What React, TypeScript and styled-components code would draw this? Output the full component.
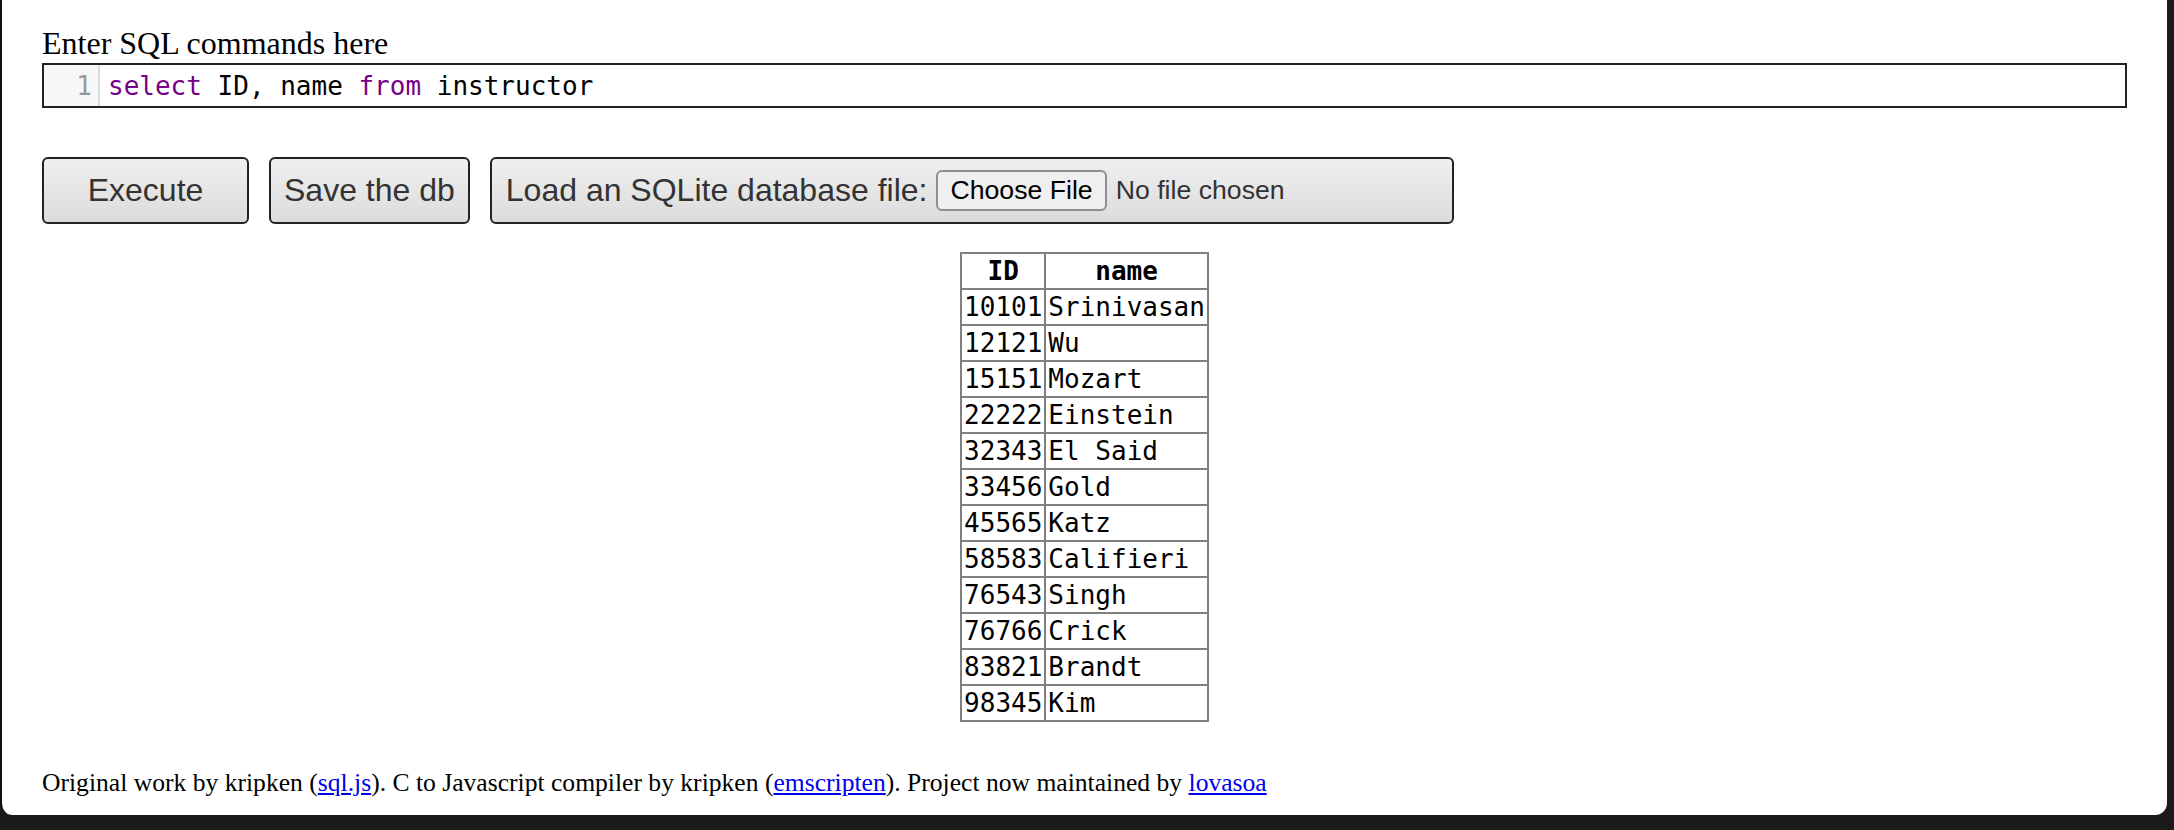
import React from 'react';
import styled, { createGlobalStyle, css } from 'styled-components';

// page chrome: dark desktop behind a white browser viewport
const GlobalStyle = createGlobalStyle`
  html, body {
    margin: 0;
    padding: 0;
    background: #1a1a1a;
  }
  body {
    width: 2174px;
    height: 830px;
    overflow: hidden;
  }
`;

const MONO = `"DejaVu Sans Mono", "Liberation Mono", monospace`;
const SANS = `"Liberation Sans", Arial, Helvetica, sans-serif`;

const Viewport = styled.div`
  box-sizing: border-box;
  width: 2167px;
  height: 815px;
  background: #fff;
  border-left: 2px solid #111;
  border-radius: 0 0 12px 12px;
  padding: 25px 40px 0 40px;
  font-family: "Liberation Serif", "Times New Roman", serif;
  color: #000;
`;

const PromptLabel = styled.label`
  display: block;
  font-size: 32px;
  line-height: 37px;
`;

/* --- sql editor (codemirror look) --- */
const Editor = styled.div`
  box-sizing: border-box;
  display: flex;
  height: 45px;
  margin-top: 1px;
  border: 2px solid #222;
  background: #fff;
`;

const Gutter = styled.div`
  box-sizing: border-box;
  width: 56px;
  display: flex;
  align-items: center;
  justify-content: flex-end;
  padding-right: 6px;
  background: #f7f7f7;
  border-right: 2px solid #ddd;
  color: #999;
  font-family: ${MONO};
  font-size: 26px;
`;

const CodeLine = styled.pre`
  margin: 0;
  padding-left: 8px;
  display: flex;
  align-items: center;
  font-family: ${MONO};
  font-size: 26px;
  color: #000;
  white-space: pre;
`;

const Keyword = styled.span`
  color: #708;
`;

/* --- toolbar --- */
const Toolbar = styled.div`
  display: flex;
  gap: 20px;
  margin-top: 49px;
`;

const buttonLook = css`
  box-sizing: border-box;
  height: 67px;
  padding: 0 13px;
  font-family: ${SANS};
  font-size: 32px;
  color: #333;
  background: linear-gradient(#efefef, #dcdcdc);
  border: 2px solid #222;
  border-radius: 6px;
`;

const ToolButton = styled.button<{ $width?: string }>`
  ${buttonLook}
  width: ${(p) => p.$width || 'auto'};
  cursor: pointer;
`;

const LoadLabel = styled.label`
  ${buttonLook}
  display: flex;
  align-items: center;
  width: 964px;
  padding: 0 14px;
  white-space: nowrap;
`;

const FileButton = styled.span`
  box-sizing: border-box;
  display: inline-flex;
  align-items: center;
  height: 41px;
  margin: 0 9px 0 9px;
  padding: 0 12px;
  font-size: 26.67px;
  color: #000;
  background: #efefef;
  border: 2px solid #8f8f8f;
  border-radius: 6px;
`;

const FileStatus = styled.span`
  font-size: 26.67px;
  color: #333;
`;

/* --- results --- */
const ResultTable = styled.table`
  margin: 28px auto 0;
  border-collapse: collapse;
  font-family: ${MONO};
  font-size: 26px;

  th,
  td {
    border: 2px solid #808080;
    padding: 2px;
    line-height: 30px;
    white-space: nowrap;
  }
  th {
    font-weight: bold;
    text-align: center;
  }
  td {
    text-align: left;
  }
`;

const Footer = styled.footer`
  margin-top: 46px;
  font-size: 25.6px;
`;

const Link = styled.a`
  color: #0000ee;
  text-decoration: underline;
`;

const rows: [string, string][] = [
  ['10101', 'Srinivasan'],
  ['12121', 'Wu'],
  ['15151', 'Mozart'],
  ['22222', 'Einstein'],
  ['32343', 'El Said'],
  ['33456', 'Gold'],
  ['45565', 'Katz'],
  ['58583', 'Califieri'],
  ['76543', 'Singh'],
  ['76766', 'Crick'],
  ['83821', 'Brandt'],
  ['98345', 'Kim'],
];

export default function App() {
  return (
    <>
      <GlobalStyle />
      <Viewport>
        <PromptLabel htmlFor="commands">Enter SQL commands here</PromptLabel>
        <Editor id="commands">
          <Gutter>1</Gutter>
          <CodeLine>
            <Keyword>select</Keyword> ID, name <Keyword>from</Keyword> instructor
          </CodeLine>
        </Editor>

        <Toolbar>
          <ToolButton $width="207px">Execute</ToolButton>
          <ToolButton>Save the db</ToolButton>
          <LoadLabel>
            Load an SQLite database file:
            <FileButton>Choose File</FileButton>
            <FileStatus>No file chosen</FileStatus>
          </LoadLabel>
        </Toolbar>

        <ResultTable>
          <thead>
            <tr>
              <th>ID</th>
              <th>name</th>
            </tr>
          </thead>
          <tbody>
            {rows.map(([id, name]) => (
              <tr key={id}>
                <td>{id}</td>
                <td>{name}</td>
              </tr>
            ))}
          </tbody>
        </ResultTable>

        <Footer>
          Original work by kripken (<Link href="#">sql.js</Link>). C to Javascript compiler by kripken (
          <Link href="#">emscripten</Link>). Project now maintained by <Link href="#">lovasoa</Link>
        </Footer>
      </Viewport>
    </>
  );
}
